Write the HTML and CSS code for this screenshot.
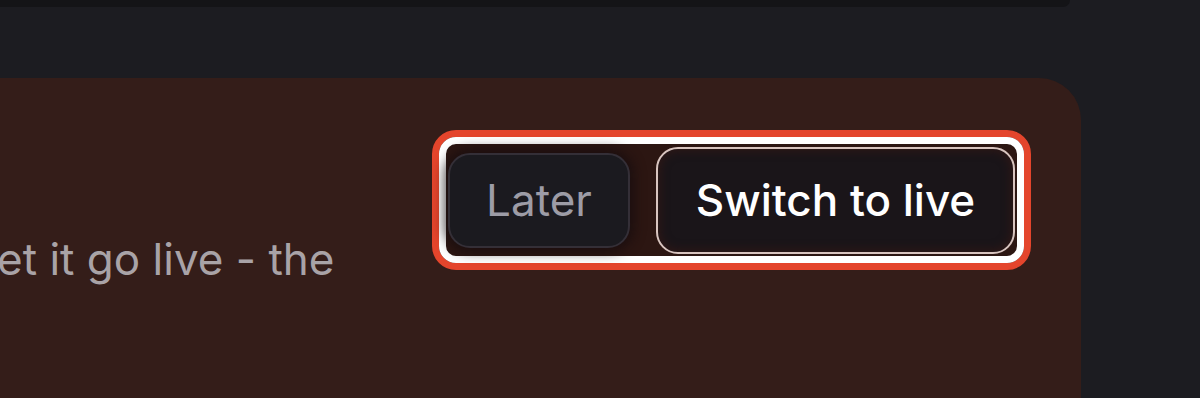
FILE: index.html
```html
<!DOCTYPE html>
<html lang="en">
<head>
    <meta charset="UTF-8">
    <meta name="viewport" content="width=device-width, initial-scale=1.0">
    <title>Switch to live</title>
    <link rel="stylesheet" href="styles.css">
</head>
<body>
    <div class="top-bar"></div>
    <div class="notice-card">
        <div class="notice-text">
            <p>et it go live - the</p>
        </div>
        <div class="focus-ring">
            <div class="actions">
                <button class="btn btn-later">Later</button>
                <button class="btn btn-live">Switch to live</button>
            </div>
        </div>
    </div>
</body>
</html>
```

FILE: styles.css
```css
body {
    margin: 0;
    background-color: #1c1c21;
    font-family: 'Inter', 'Noto Sans', sans-serif;
    overflow: hidden;
    height: 398px;
}
.top-bar {
    width: 1070px;
    height: 7px;
    background-color: #141417;
    border-bottom-right-radius: 14px;
}
.notice-card {
    display: flex;
    justify-content: space-between;
    align-items: flex-start;
    width: 1081px;
    height: 320px;
    margin-top: 71px;
    padding: 52px 50px 0 0;
    box-sizing: border-box;
    background-color: #341d19;
    border-top-right-radius: 42px;
}
.notice-text p {
    margin: 103px 0 0 -3px;
    font-size: 44px;
    line-height: 52px;
    color: #a9a3a7;
}
.focus-ring {
    border: 7px solid #e4452c;
    border-radius: 24px;
}
.actions {
    display: flex;
    align-items: center;
    gap: 25px;
    width: 585px;
    height: 126px;
    padding: 0 2px;
    box-sizing: border-box;
    border: 7px solid #ffffff;
    border-radius: 17px;
    background-color: #2c1612;
}
.btn {
    font-family: 'Inter', 'Noto Sans', sans-serif;
    font-size: 44px;
    border-radius: 22px;
    padding: 0;
    cursor: pointer;
}
.btn-later {
    width: 182px;
    height: 95px;
    color: #9d9ca6;
    background-color: #1b1a1f;
    border: 2px solid #342f37;
    box-shadow: 0 0 12px 4px rgba(20, 12, 14, 0.7);
}
.btn-live {
    width: 359px;
    height: 107px;
    margin-left: auto;
    color: #ffffff;
    font-weight: 500;
    background-color: #1a1519;
    border: 2px solid #d8c4bf;
    box-shadow: inset 0 0 10px 2px rgba(60, 25, 20, 0.6);
}
```
